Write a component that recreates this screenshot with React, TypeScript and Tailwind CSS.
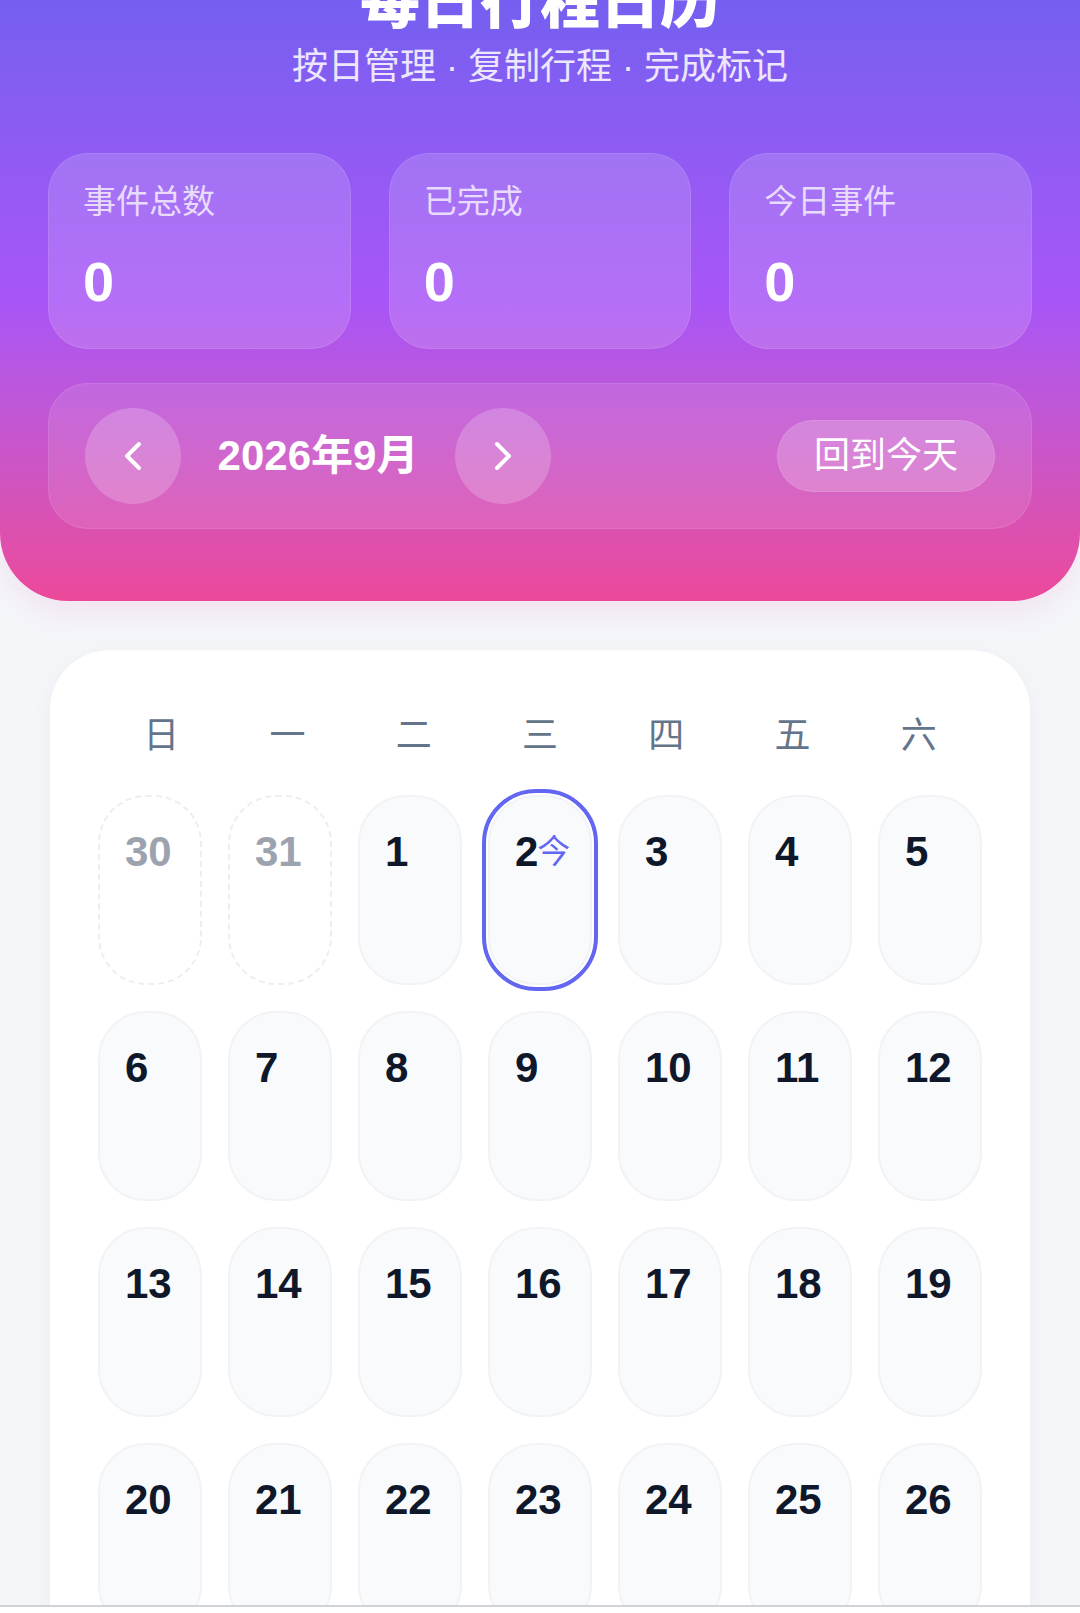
import React from "react";
import { ChevronLeft, ChevronRight } from "lucide-react";

type Day = { n: number; other: boolean; today?: boolean };

const weekdays = ["日", "一", "二", "三", "四", "五", "六"];

function buildDays(): Day[] {
  const d: Day[] = [{ n: 30, other: true }, { n: 31, other: true }];
  for (let i = 1; i <= 30; i++) d.push({ n: i, other: false, today: i === 2 });
  for (let i = 1; i <= 3; i++) d.push({ n: i, other: true });
  return d;
}

function Stat({ label }: { label: string }) {
  return (
    <div className="rounded-[40px] border border-white/10 bg-white/15 px-[34px] pt-[28px] pb-[38px]">
      <div className="text-[33px] leading-[40px] text-white/75">{label}</div>
      <div className="mt-[32px] text-[56px] font-bold leading-[56px] text-white">0</div>
    </div>
  );
}

export default function App() {
  const days = buildDays();
  return (
    <div className="min-h-screen bg-[#f4f6fa] font-['Liberation_Sans','Noto_Sans_CJK_SC',sans-serif]">
      <header className="flow-root rounded-b-[68px] bg-linear-to-b from-[#755ff0] via-[#a855f7] to-[#ec4899] px-12 pb-[72px] shadow-[0_12px_30px_rgba(236,72,153,0.10)]">
        <h1 className="-mt-[33px] text-center text-[60px] font-black leading-[72px] text-white">每日行程日历</h1>
        <p className="mt-[4px] text-center text-[36px] leading-[48px] text-white/85">按日管理 · 复制行程 · 完成标记</p>
        <div className="mt-[62px] grid grid-cols-3 gap-[38px]">
          <Stat label="事件总数" />
          <Stat label="已完成" />
          <Stat label="今日事件" />
        </div>
        <div className="mt-[34px] flex items-center rounded-[40px] border border-white/10 bg-white/10 px-[36px] py-[24px]">
          <button className="flex h-[96px] w-[96px] items-center justify-center rounded-full bg-white/20 text-white">
            <ChevronLeft size={48} strokeWidth={2} />
          </button>
          <div className="w-[274px] text-center text-[42px] font-bold leading-[48px] text-white">2026年9月</div>
          <button className="flex h-[96px] w-[96px] items-center justify-center rounded-full bg-white/20 text-white">
            <ChevronRight size={48} strokeWidth={2} />
          </button>
          <button className="ml-auto h-[72px] rounded-full border border-white/10 bg-white/20 px-[36px] text-[36px] leading-[48px] text-white">
            回到今天
          </button>
        </div>
      </header>

      <div className="px-[50px] pt-[49px] pb-[60px]">
        <div className="rounded-[60px] bg-white px-[48px] pt-[62px] pb-[48px] shadow-[0_4px_24px_rgba(15,23,42,0.04)]">
          <div className="grid grid-cols-7">
            {weekdays.map((w) => (
              <div key={w} className="text-center text-[36px] leading-[48px] text-[#64748b]">
                {w}
              </div>
            ))}
          </div>
          <div className="mt-[35px] grid grid-cols-7 gap-[26px]">
            {days.map((d, i) => (
              <div
                key={i}
                className={
                  d.other
                    ? "h-[190px] rounded-[48px] border-2 border-dashed border-[#eceef2] pl-[25px] pt-[34px]"
                    : d.today
                    ? "h-[190px] rounded-[48px] border-2 border-[#f1f3f7] bg-[#f8fafc] pl-[25px] pt-[34px] outline-4 outline-offset-2 outline-[#6366f1]"
                    : "h-[190px] rounded-[48px] border-2 border-[#f1f3f7] bg-[#f8fafc] pl-[25px] pt-[34px]"
                }
              >
                <span
                  className={
                    d.other
                      ? "text-[42px] font-bold leading-none text-[#9ca3af]"
                      : "text-[42px] font-bold leading-none text-[#0f172a]"
                  }
                >
                  {d.n}
                </span>
                {d.today && (
                  <span className="relative -top-[3px] ml-[-1px] text-[33px] leading-none text-[#6366f1]">今</span>
                )}
              </div>
            ))}
          </div>
        </div>
      </div>

      <div className="fixed inset-x-0 bottom-0 h-[8px] border-t-2 border-[#cfd2d6] bg-white" />
    </div>
  );
}
